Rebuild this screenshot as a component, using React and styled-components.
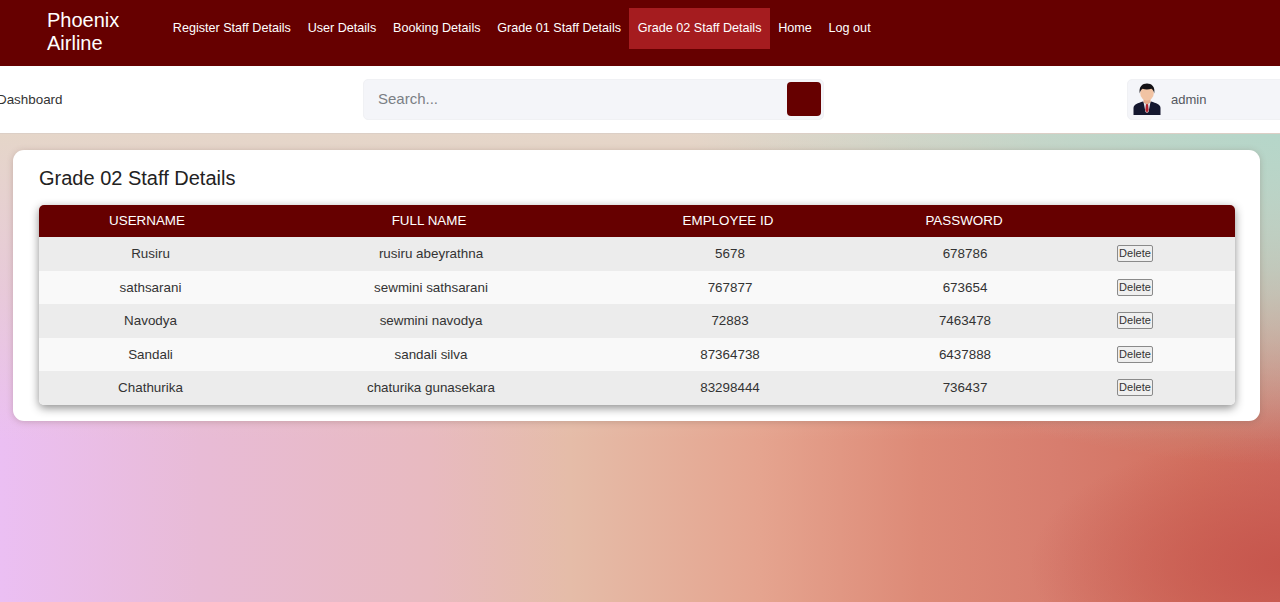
import React from "react";
import styled, { createGlobalStyle } from "styled-components";

const Global = createGlobalStyle`
  html, body { margin: 0; padding: 0; height: 100%; overflow: hidden; }
  body { font-family: "Liberation Sans", Arial, sans-serif; }
  #root { height: 100%; }
`;

const Page = styled.div`
  height: 602px;
  width: 1280px;
  overflow: hidden;
  display: flex;
  flex-direction: column;
  background:
    radial-gradient(ellipse 600px 340px at 1290px 125px, #b4d6c9 0%, rgba(180, 214, 201, 0.68) 42%, rgba(180, 214, 201, 0) 100%),
    linear-gradient(180deg, rgba(229, 214, 201, 1) 133px, rgba(229, 210, 196, 0.55) 290px, rgba(229, 200, 185, 0) 440px),
    radial-gradient(ellipse 260px 130px at 1290px 565px, #c6554c 0%, rgba(198, 85, 76, 0) 100%),
    linear-gradient(90deg, #ebbff3 0%, #e8bbd6 200px, #e8bac0 430px, #e5bca8 570px, #e5a48f 760px, #dd8a77 920px, #d77d6e 1060px, #d2705f 1200px, #cf6a5e 1280px);
`;

const NavBar = styled.nav`
  flex: none;
  height: 66px;
  background: #660000;
  display: flex;
  align-items: center;
  padding-left: 47px;
  box-sizing: border-box;
`;

const Brand = styled.a`
  width: 117.4px;
  color: #fff;
  font-size: 20px;
  line-height: 23px;
  margin-top: -3px;
`;

const NavList = styled.ul`
  list-style: none;
  display: flex;
  margin: -9px 0 0;
  padding: 0;
  gap: 0;
`;

const NavItem = styled.li`
  height: 41px;
  line-height: 40px;
  padding: 0 8.4px;
  font-size: 12.6px;
  color: #fff;
  white-space: nowrap;
  background: ${(p) => (p.$active ? "#a51c1f" : "transparent")};
`;

const TopBar = styled.header`
  flex: none;
  height: 68px;
  background: #fff;
  border-bottom: 1px solid #dccfc6;
  box-sizing: border-box;
  display: flex;
  align-items: center;
`;

const Title = styled.div`
  width: 366px;
  margin-left: -3px;
  font-size: 13.4px;
  color: #333;
  flex: none;
`;

const SearchBox = styled.div`
  flex: none;
  width: 461px;
  height: 41px;
  box-sizing: border-box;
  background: #f4f5f9;
  border: 1px solid #f0f1f4;
  border-radius: 5px;
  display: flex;
  align-items: center;
  justify-content: space-between;
  padding: 0 2px 2px 14px;
`;

const SearchText = styled.span`
  font-size: 15px;
  color: #7b7f85;
`;

const SearchButton = styled.button`
  width: 34px;
  height: 34px;
  border: 0;
  padding: 0;
  border-radius: 4px;
  background: #660000;
`;

const Profile = styled.div`
  flex: none;
  margin-left: 303px;
  width: 200px;
  height: 41px;
  box-sizing: border-box;
  background: #f4f5f9;
  border: 1px solid #f0f1f4;
  border-radius: 5px;
  display: flex;
  align-items: center;
  gap: 10px;
  padding-left: 5px;
  font-size: 13px;
  color: #555860;
`;

const Panel = styled.section`
  margin: 16px 20px 0 13px;
  height: 271px;
  box-sizing: border-box;
  background: #fff;
  border-radius: 11px;
  padding: 16px 25px 0 26px;
  box-shadow: 0 1px 6px rgba(120, 90, 80, 0.3);
`;

const Heading = styled.h2`
  margin: 0 0 15px;
  height: 24px;
  line-height: 24px;
  font-size: 20px;
  font-weight: 400;
  color: #222;
`;

const Table = styled.div`
  border-radius: 5px;
  box-shadow: 0 3px 10px rgba(0, 0, 0, 0.45);
  overflow: hidden;
`;

const HeaderRow = styled.div`
  display: grid;
  grid-template-columns: 216px 348px 250px 222px 1fr;
  height: 32px;
  line-height: 31px;
  background: #660000;
  color: #fff;
  font-size: 13.4px;
  text-align: center;
`;

const Row = styled.div`
  display: grid;
  grid-template-columns: 223px 338px 260px 210px 1fr;
  height: 33.55px;
  align-items: center;
  background: ${(p) => (p.$odd ? "#ececec" : "#f9f9f9")};
  color: #333;
  font-size: 13.4px;
  text-align: center;
`;

const ActionCell = styled.div`
  padding-left: 47px;
  display: flex;
`;

const DeleteButton = styled.button`
  width: 36px;
  height: 17px;
  padding: 0;
  font-family: "Liberation Sans", Arial, sans-serif;
  font-size: 11px;
  line-height: 13px;
  color: #333;
  background: #efefef;
  border: 1px solid #8a8a8a;
  border-radius: 2px;
`;

const Avatar = () => (
  <svg width="28" height="33" viewBox="0 0 28 33" aria-hidden="true">
    <path d="M0.5 32 V25 C0.5 21.5 5 20 10 18.5 L14 21 L18 18.5 C23 20 27.5 21.5 27.5 25 V32 Z" fill="#14172e" />
    <path d="M10.5 19 L14 21 L17.5 19 L15.5 29 L14 30 L12.5 29 Z" fill="#dfe3ea" />
    <path d="M13 21 H15 L15.7 27 L14 30 L12.3 27 Z" fill="#b3202c" />
    <path d="M10.5 14 H17.5 V19.5 L14 21.5 L10.5 19.5 Z" fill="#e3a988" />
    <ellipse cx="14" cy="10" rx="6.8" ry="7.6" fill="#f1c3a3" />
    <path d="M6.8 10.5 C5.5 3.5 9.5 0.5 14 0.5 C18.5 0.5 22.5 3.5 21.2 10.5 C20.8 8 19.8 6.5 18.4 5.8 C15.5 6.8 12 6.8 9.6 5.8 C8.2 6.5 7.2 8 6.8 10.5 Z" fill="#141216" />
  </svg>
);

const rows = [
  ["Rusiru", "rusiru abeyrathna", "5678", "678786"],
  ["sathsarani", "sewmini sathsarani", "767877", "673654"],
  ["Navodya", "sewmini navodya", "72883", "7463478"],
  ["Sandali", "sandali silva", "87364738", "6437888"],
  ["Chathurika", "chaturika gunasekara", "83298444", "736437"],
];

const links = [
  "Register Staff Details",
  "User Details",
  "Booking Details",
  "Grade 01 Staff Details",
  "Grade 02 Staff Details",
  "Home",
  "Log out",
];

export default function App() {
  return (
    <Page>
      <Global />
      <NavBar>
        <Brand>Phoenix Airline</Brand>
        <NavList>
          {links.map((l) => (
            <NavItem key={l} $active={l === "Grade 02 Staff Details"}>{l}</NavItem>
          ))}
        </NavList>
      </NavBar>
      <TopBar>
        <Title>Dashboard</Title>
        <SearchBox>
          <SearchText>Search...</SearchText>
          <SearchButton aria-label="Search" />
        </SearchBox>
        <Profile>
          <Avatar />
          admin
        </Profile>
      </TopBar>
      <Panel>
        <Heading>Grade 02 Staff Details</Heading>
        <Table>
          <HeaderRow>
            <div>USERNAME</div>
            <div>FULL NAME</div>
            <div>EMPLOYEE ID</div>
            <div>PASSWORD</div>
            <div />
          </HeaderRow>
          {rows.map((r, i) => (
            <Row key={r[0]} $odd={i % 2 === 0}>
              {r.map((c) => (
                <div key={c}>{c}</div>
              ))}
              <ActionCell>
                <DeleteButton>Delete</DeleteButton>
              </ActionCell>
            </Row>
          ))}
        </Table>
      </Panel>
    </Page>
  );
}
